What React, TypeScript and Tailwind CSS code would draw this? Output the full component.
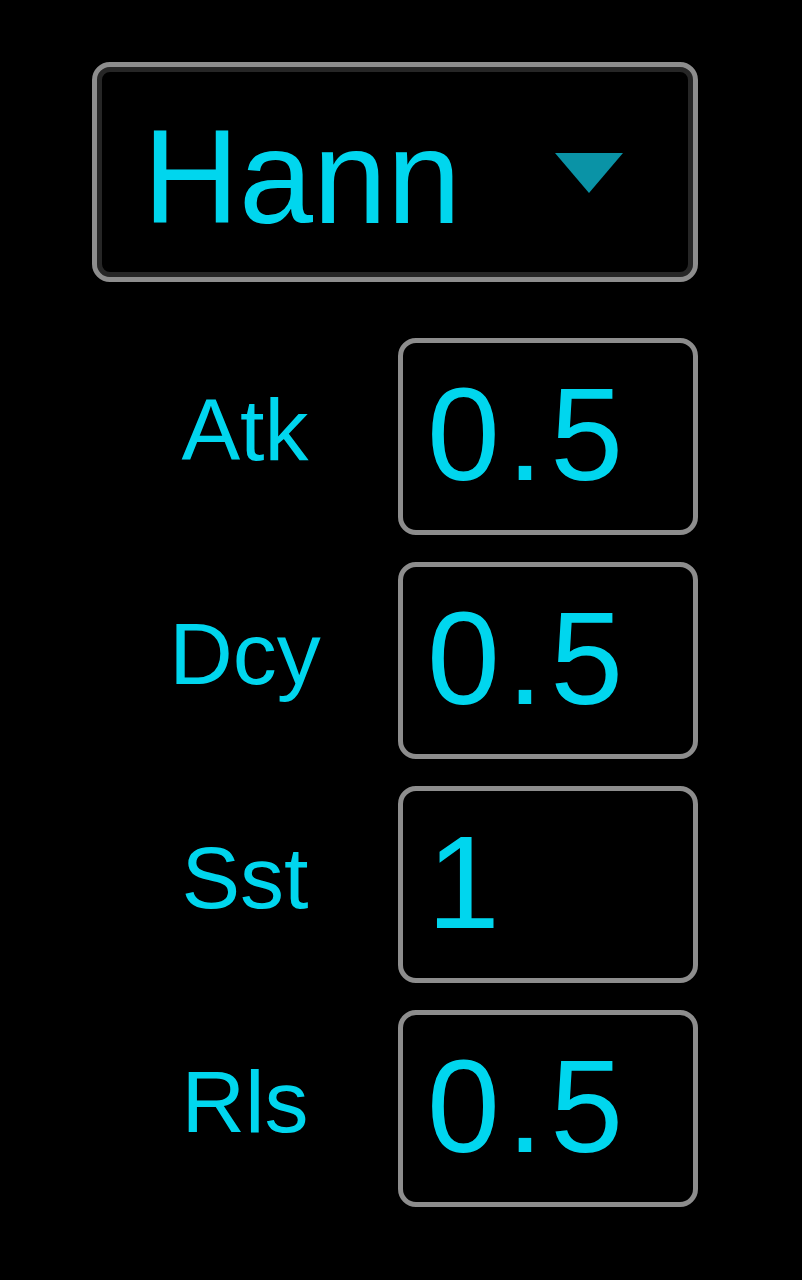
const params = [
  { label: "Atk", value: "0.5" },
  { label: "Dcy", value: "0.5" },
  { label: "Sst", value: "1" },
  { label: "Rls", value: "0.5" },
];

export default function App() {
  return (
    <div
      className="min-h-[1280px] w-full bg-black text-[#00d6ee]"
      style={{ fontFamily: '"Liberation Sans", Arial, sans-serif' }}
    >
      <div className="ml-[92px] w-[606px] pt-[62px] flex flex-col">
        <div className="h-[220px] rounded-[18px] border-[5px] border-[#8d8d8d] bg-black shadow-[inset_0_0_0_5px_#262626] flex items-center pl-[46px] pr-[70px] pt-[10px]">
          <span className="text-[133px] leading-none">Hann</span>
          <svg className="ml-auto mb-[9px]" width="68" height="40" viewBox="0 0 68 40">
            <polygon points="0,0 68,0 34,40" fill="#0a93a6" />
          </svg>
        </div>

        <div className="mt-[56px] flex flex-col gap-[27px]">
          {params.map((p) => (
            <div key={p.label} className="flex items-center">
              <div className="w-[306px] pb-[14px] text-center text-[88px] leading-none">
                {p.label}
              </div>
              <div className="h-[197px] w-[300px] rounded-[18px] border-[5px] border-[#8d8d8d] bg-black flex items-center pl-[24px] pb-[5px]">
                <span className="text-[131px] leading-none tracking-[7px]">{p.value}</span>
              </div>
            </div>
          ))}
        </div>
      </div>
    </div>
  );
}
